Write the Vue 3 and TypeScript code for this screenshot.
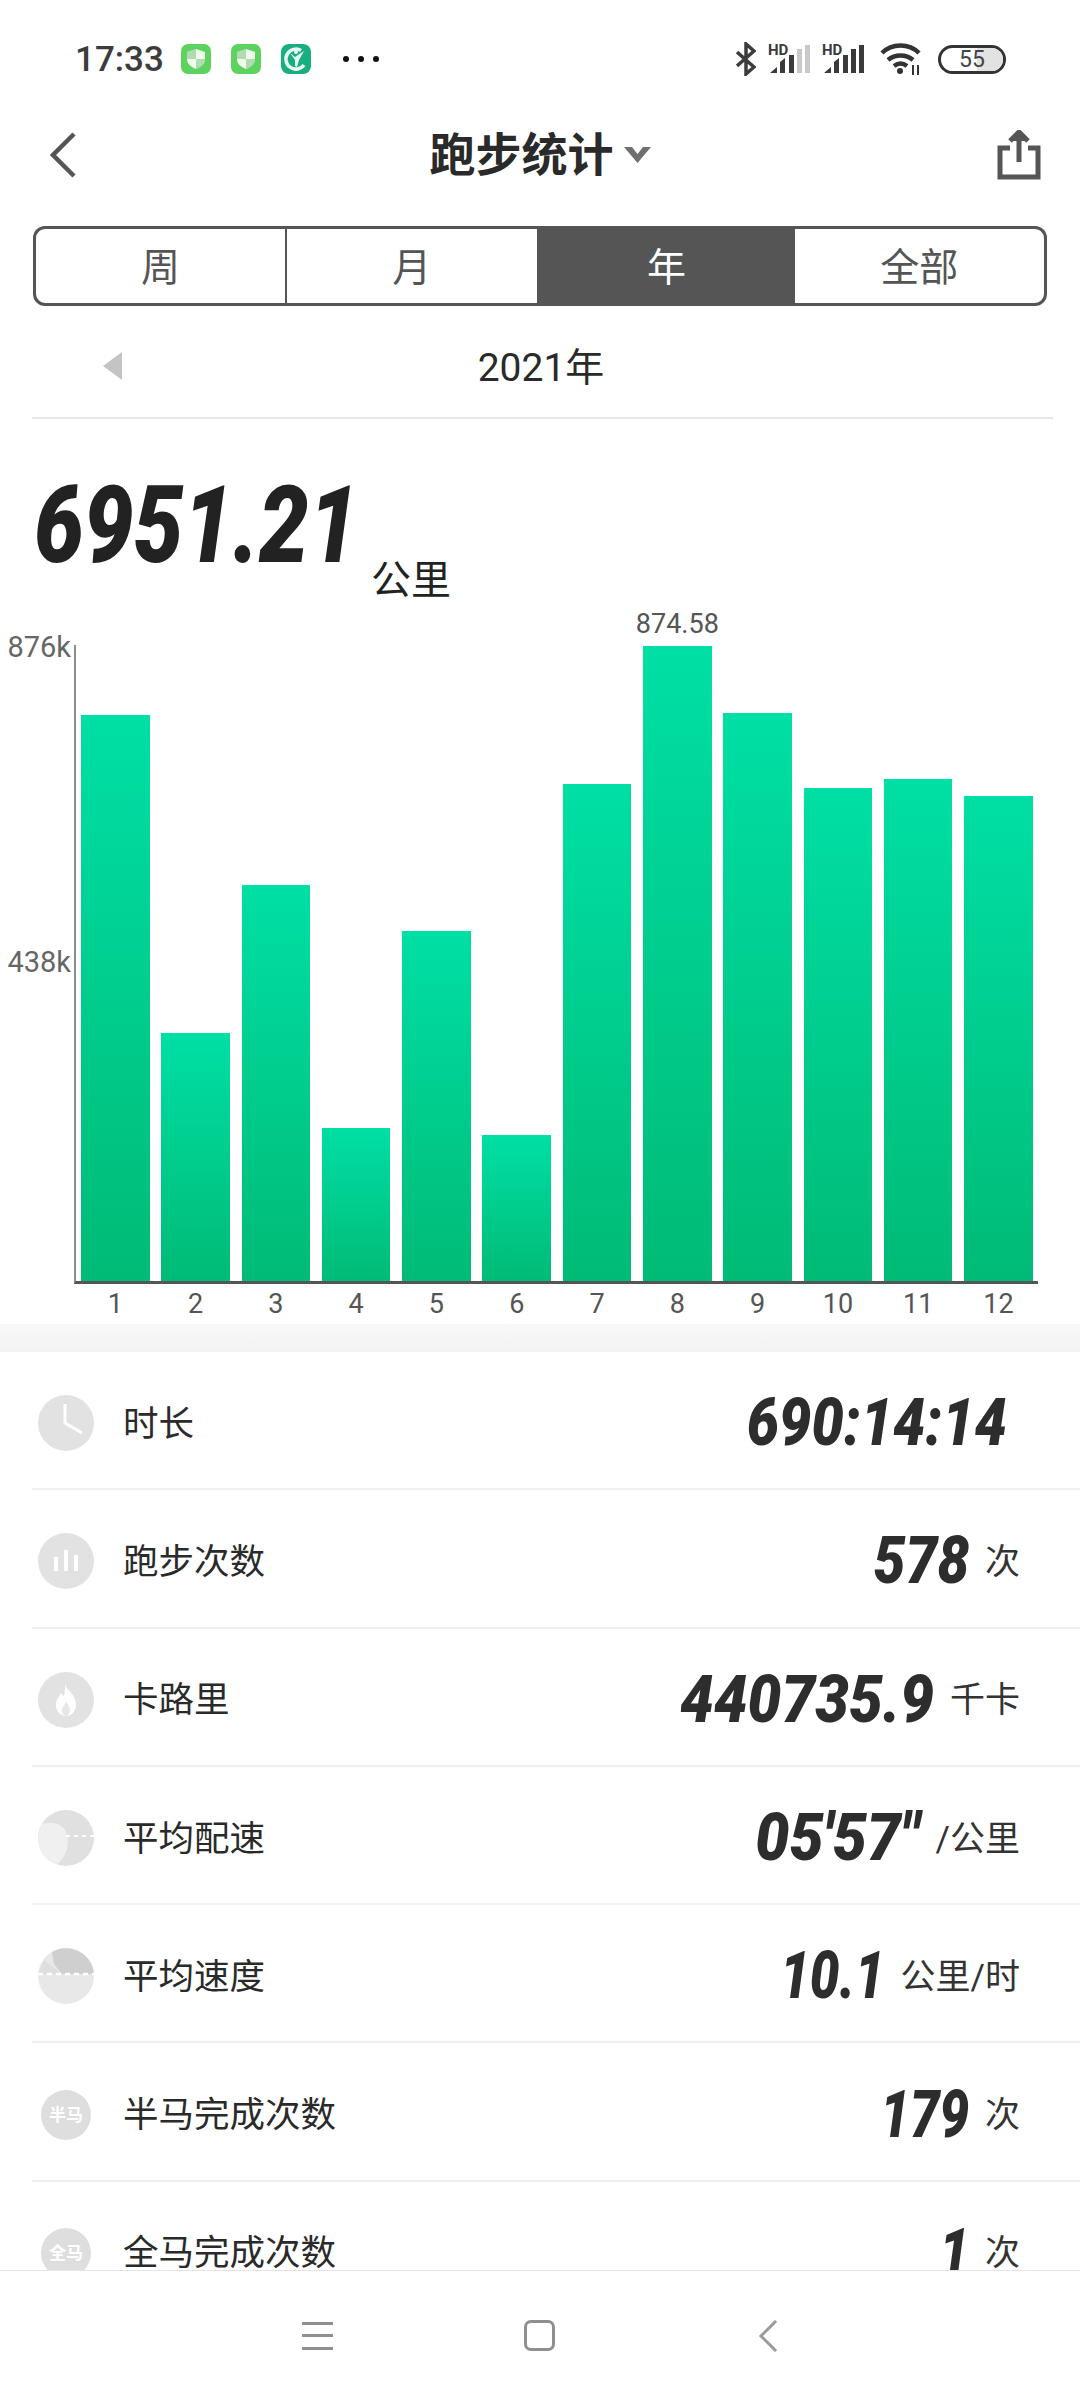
<script setup lang="ts">
interface StatRow {
  label: string
  value: string
  unit: string
  squeeze: number
  icon: 'clock' | 'bars' | 'flame' | 'pace' | 'speed' | 'half' | 'full'
}

const tabs = ['周', '月', '年', '全部']
const activeTab = 2

const months = [779.5, 341.6, 545.4, 210.7, 482, 201, 684.5, 874.58, 782.3, 679, 691.4, 668]
const maxValue = 876

const rows: StatRow[] = [
  { label: '时长', value: '690:14:14', unit: '', squeeze: 0.87, icon: 'clock' },
  { label: '跑步次数', value: '578', unit: '次', squeeze: 0.86, icon: 'bars' },
  { label: '卡路里', value: '440735.9', unit: '千卡', squeeze: 0.91, icon: 'flame' },
  { label: '平均配速', value: `05'57"`, unit: '/公里', squeeze: 0.92, icon: 'pace' },
  { label: '平均速度', value: '10.1', unit: '公里/时', squeeze: 0.8, icon: 'speed' },
  { label: '半马完成次数', value: '179', unit: '次', squeeze: 0.8, icon: 'half' },
  { label: '全马完成次数', value: '1', unit: '次', squeeze: 0.8, icon: 'full' },
]

function barHeight(value: number) {
  return `${(value / maxValue) * 100}%`
}
</script>

<template>
  <div class="page">
    <header class="status">
      <div class="status-left">
        <span class="time">17:33</span>
        <svg class="app-icon" viewBox="0 0 30 30">
          <rect width="30" height="30" rx="7" fill="#5ed25f" />
          <path d="M15 5l9 3v7c0 5-4 8-9 10-5-2-9-5-9-10V8z" fill="#eefbe9" />
          <path d="M15 5v10H6V8zM15 15h9c0 5-4 8-9 10z" fill="#7fbf8a" opacity=".55" />
        </svg>
        <svg class="app-icon" viewBox="0 0 30 30">
          <rect width="30" height="30" rx="7" fill="#5ed25f" />
          <path d="M15 5l9 3v7c0 5-4 8-9 10-5-2-9-5-9-10V8z" fill="#eefbe9" />
          <path d="M15 5v10H6V8zM15 15h9c0 5-4 8-9 10z" fill="#7fbf8a" opacity=".55" />
        </svg>
        <svg class="app-icon" viewBox="0 0 30 30">
          <rect width="30" height="30" rx="8" fill="#18ae82" />
          <path d="M20 6.500A10 10 0 1 0 23 21" fill="none" stroke="#e6f8f1" stroke-width="3.500" />
          <path d="M9 9l5 4 9-6-5 9-2 7-2-1 0-6z" fill="#e6f8f1" />
          <circle cx="15" cy="8" r="2" fill="#e6f8f1" />
        </svg>
        <span class="dots"><i></i><i></i><i></i></span>
      </div>
      <div class="status-right">
        <svg class="bt" viewBox="0 0 20 34" fill="none" stroke="#3c3c3c" stroke-width="3.500">
          <path d="M1 10l17 15-8 7V2l8 7L1 24" />
        </svg>
        <svg class="signal" viewBox="0 0 42 30">
          <text x="0" y="11" class="hd">HD</text>
          <path d="M2 29l7-6v6zM12 29V18l5-4v15zM21 29V11h5v18z" fill="#3a3a3a" />
          <path d="M29 29V5h5v24zM37 29V1h5v28z" fill="#c9c9c9" />
        </svg>
        <svg class="signal" viewBox="0 0 42 30">
          <text x="0" y="11" class="hd">HD</text>
          <path d="M2 29l7-6v6zM12 29V18l5-4v15zM21 29V11h5v18zM29 29V5h5v24zM37 29V1h5v28z" fill="#3a3a3a" />
        </svg>
        <svg class="wifi" viewBox="0 0 42 32" fill="none" stroke="#333" stroke-width="4.500">
          <path d="M2 10c10-10 27-10 37 0M8 17c7-6 18-6 25 0M14 23c4-3 9-3 13 0" />
          <circle cx="20" cy="28" r="3" fill="#333" stroke="none" />
          <path d="M33 22v10M38 22v10" stroke-width="2" />
        </svg>
        <div class="battery"><span class="battery-level"></span><span class="battery-text">55</span></div>
      </div>
    </header>

    <nav class="nav">
      <svg class="back" viewBox="0 0 26 46" fill="none" stroke="#555" stroke-width="4.500">
        <path d="M24 2L3 23l21 21" />
      </svg>
      <div class="title">
        <span>跑步统计</span>
        <svg class="caret" viewBox="0 0 29 17"><path d="M1 1h8l5.500 7L20 1h8L14.500 17z" fill="#6f6f6f" /></svg>
      </div>
      <svg class="share" viewBox="0 0 44 50" fill="none" stroke="#555" stroke-width="5">
        <path d="M13 18H3v29h38V18H31" />
        <path d="M22 32V5" />
        <path d="M13 11l9-9 9 9" fill="#555" />
      </svg>
    </nav>

    <div class="tabs">
      <div v-for="(tab, i) in tabs" :key="tab" class="tab" :class="{ active: i === activeTab }">{{ tab }}</div>
    </div>

    <div class="year-row">
      <svg class="prev" viewBox="0 0 19 28"><path d="M19 0v28L0 14z" fill="#c4c4c4" /></svg>
      <span>2021年</span>
    </div>

    <section class="summary">
      <span class="total"><span class="total-num">6951.21</span></span>
      <span class="total-unit">公里</span>
    </section>

    <section class="chart">
      <span class="y-label y-top">876k</span>
      <span class="y-label y-mid">438k</span>
      <div v-for="(value, i) in months" :key="i" class="bar" :style="{ height: barHeight(value) }">
        <span v-if="value === 874.58" class="bar-tip">874.58</span>
      </div>
    </section>
    <div class="x-axis">
      <span v-for="(_, i) in months" :key="i">{{ i + 1 }}</span>
    </div>
    <div class="band"></div>

    <main class="list">
      <div v-for="row in rows" :key="row.label" class="row">
        <svg class="row-icon" viewBox="0 0 56 56">
          <template v-if="row.icon === 'clock'">
            <circle cx="28" cy="28" r="28" fill="#e2e2e2" />
            <path d="M27 9v19l17 10" fill="none" stroke="#fff" stroke-width="3" />
          </template>
          <template v-else-if="row.icon === 'bars'">
            <circle cx="28" cy="28" r="28" fill="#e2e2e2" />
            <path d="M16 24h4v14h-4zM26 17h4v21h-4zM36 22h4v16h-4z" fill="#fff" />
          </template>
          <template v-else-if="row.icon === 'flame'">
            <circle cx="28" cy="28" r="28" fill="#e2e2e2" />
            <path d="M27 12c1 6 11 10 11 21 0 7-5 11-10 11s-10-4-10-11c0-6 3-8 5-12 1 2 2 3 3 3 1-4 1-8 1-12z" fill="#fff" />
            <path d="M28 30c2 3 4 5 4 8s-2 6-4 6-4-3-4-6 3-5 4-8z" fill="#e6e6e6" />
          </template>
          <template v-else-if="row.icon === 'pace'">
            <circle cx="28" cy="28" r="28" fill="#e0e0e0" />
            <path d="M4 14C12 12 22 12 27 20c6 12 2 26-8 34C8 50 0 40 0 28c0-5 2-10 4-14z" fill="#f0f0f0" />
            <path d="M28 26h28" stroke="#fff" stroke-width="2" stroke-dasharray="4 4" />
          </template>
          <template v-else-if="row.icon === 'speed'">
            <circle cx="28" cy="28" r="28" fill="#e8e8e8" />
            <path d="M14 4A28 28 0 0 1 56 26H24L16 16z" fill="#cfcfcf" />
            <path d="M6 12L0 26h24z" fill="#dedede" />
            <path d="M0 26h56" stroke="#fff" stroke-width="2.500" stroke-dasharray="5 4" />
          </template>
          <template v-else>
            <circle cx="28" cy="28" r="25" fill="#dedede" />
            <text x="28" y="34" class="badge">{{ row.icon === 'half' ? '半马' : '全马' }}</text>
          </template>
        </svg>
        <span class="row-label">{{ row.label }}</span>
        <span class="row-value" :class="{ solo: !row.unit }" :style="{ transform: `scaleX(${row.squeeze})` }">{{ row.value }}</span>
        <span v-if="row.unit" class="row-unit">{{ row.unit }}</span>
      </div>
    </main>

    <footer class="softkeys">
      <div class="menu-key"><i></i><i></i><i></i></div>
      <div class="home-key"></div>
      <svg class="back-key" viewBox="0 0 20 32" fill="none" stroke="#999" stroke-width="3">
        <path d="M18 1L3 16l15 15" />
      </svg>
    </footer>
  </div>
</template>

<style>
html,
body {
  margin: 0;
  background: #fff;
}
</style>

<style scoped>
.page {
  width: 1080px;
  height: 2400px;
  display: flex;
  flex-direction: column;
  overflow: hidden;
  background: #fff;
  color: #222;
  font-family: Roboto, 'Noto Sans CJK SC', sans-serif;
}

.status {
  height: 118px;
  flex-shrink: 0;
  display: flex;
  justify-content: space-between;
  align-items: center;
  padding: 0 74px 0 75px;
}

.status-left,
.status-right {
  display: flex;
  align-items: center;
}

.time {
  width: 106px;
  font-size: 35px;
  font-weight: 500;
  color: #3c3c3c;
}

.app-icon {
  width: 30px;
  height: 30px;
  margin-right: 20px;
}

.dots {
  display: flex;
  gap: 9px;
  margin-left: 12px;
}

.dots i {
  width: 6px;
  height: 6px;
  border-radius: 50%;
  background: #111;
}

.bt {
  width: 20px;
  height: 34px;
  margin-right: 12px;
}

.signal {
  width: 42px;
  height: 30px;
  margin-right: 12px;
  overflow: visible;
}

.hd {
  font-family: Roboto, sans-serif;
  font-size: 15px;
  font-weight: 700;
  fill: #3a3a3a;
}

.wifi {
  width: 42px;
  height: 32px;
  margin: 0 16px 0 4px;
}

.battery {
  position: relative;
  width: 68px;
  height: 29px;
  box-sizing: border-box;
  border: 3px solid #333;
  border-radius: 15px;
  overflow: hidden;
  display: flex;
  align-items: center;
  justify-content: center;
}

.battery-level {
  position: absolute;
  right: 0;
  top: 0;
  bottom: 0;
  width: 26px;
  background: #e2e2e2;
}

.battery-text {
  position: relative;
  font-size: 23px;
  color: #444;
}

.nav {
  height: 74px;
  flex-shrink: 0;
  display: grid;
  grid-template-columns: 1fr auto 1fr;
  align-items: center;
  padding: 0 39px 0 50px;
}

.back {
  width: 26px;
  height: 46px;
}

.title {
  display: flex;
  align-items: center;
  gap: 9px;
  margin-left: -10px;
  font-size: 46px;
  font-weight: 700;
  line-height: 1;
  color: #2a2a2a;
}

.caret {
  width: 29px;
  height: 17px;
  margin-top: -2px;
}

.share {
  width: 44px;
  height: 50px;
  justify-self: end;
}

.tabs {
  flex-shrink: 0;
  height: 80px;
  margin: 34px 33px 0;
  box-sizing: border-box;
  display: flex;
  border: 3px solid #555;
  border-radius: 12px;
  overflow: hidden;
}

.tab {
  flex: 1;
  display: flex;
  align-items: center;
  justify-content: center;
  padding-bottom: 4px;
  font-size: 39px;
  color: #555;
  border-left: 2px solid #555;
}

.tab:first-child {
  flex: 0 0 249px;
  border-left: 0;
}

.tab.active {
  flex: 0 0 256px;
  background: #555;
  color: #fff;
}

.tab.active + .tab {
  border-left: 0;
}

.year-row {
  position: relative;
  flex-shrink: 0;
  height: 107px;
  padding: 4px 3px 0 0;
  margin: 0 27px 0 32px;
  display: flex;
  align-items: center;
  justify-content: center;
  border-bottom: 2px solid #e6e6e6;
  font-size: 39px;
  color: #2a2a2a;
}

.prev {
  position: absolute;
  left: 71px;
  top: 46px;
  width: 19px;
  height: 28px;
}

.summary {
  flex-shrink: 0;
  height: 174px;
  padding: 52px 0 0 34px;
  display: flex;
  align-items: flex-start;
  color: #222;
}

.total {
  width: 322px;
  font-size: 108px;
  font-weight: 900;
  font-style: italic;
  line-height: 1;
  white-space: nowrap;
}

.total-num {
  display: inline-block;
  transform: scaleX(0.82);
  transform-origin: left center;
}

.total-unit {
  margin: 90px 0 0 15px;
  font-size: 40px;
  line-height: 1;
}

.chart {
  position: relative;
  flex-shrink: 0;
  height: 639px;
  margin-left: 74px;
  width: 964px;
  box-sizing: border-box;
  padding-left: 5px;
  display: flex;
  gap: 11.800px;
  align-items: flex-end;
  border-left: 2px solid #8c8c8c;
  border-bottom: 3px solid #555;
}

.y-label {
  position: absolute;
  right: 100%;
  margin-right: 5px;
  font-size: 29px;
  line-height: 1;
  color: #666;
}

.y-top {
  top: -12px;
}

.y-mid {
  top: 303px;
}

.bar {
  position: relative;
  width: 68.500px;
  flex-shrink: 0;
  background: linear-gradient(180deg, #00dfa5, #00bb76);
}

.bar-tip {
  position: absolute;
  left: -10px;
  right: -10px;
  bottom: 100%;
  margin-bottom: 8px;
  text-align: center;
  font-size: 27px;
  line-height: 1;
  color: #555;
}

.x-axis {
  flex-shrink: 0;
  height: 40px;
  margin-left: 74px;
  padding-left: 7px;
  display: flex;
  gap: 11.800px;
  align-items: center;
  font-size: 27px;
  color: #555;
}

.x-axis span {
  width: 68.500px;
  flex-shrink: 0;
  text-align: center;
}

.band {
  flex-shrink: 0;
  height: 28px;
  background: linear-gradient(180deg, #f8f8f8, #f3f3f3);
}

.list {
  flex: 1;
  min-height: 0;
  overflow: hidden;
  margin-left: 32px;
}

.row {
  height: 138.300px;
  box-sizing: border-box;
  padding: 6px 60px 0 6px;
  display: flex;
  align-items: center;
  border-bottom: 2px solid #f0f0f0;
}

.row-icon {
  width: 56px;
  height: 56px;
  flex-shrink: 0;
}

.badge {
  font-size: 17px;
  font-weight: 700;
  fill: #fff;
  text-anchor: middle;
}

.row-label {
  flex: 1;
  margin: 0 0 6px 29px;
  font-size: 35.500px;
  color: #2a2a2a;
}

.row-value {
  font-size: 66px;
  font-weight: 900;
  font-style: italic;
  line-height: 1;
  color: #2d2d2d;
  transform-origin: right center;
}

.row-value.solo {
  margin-right: 13px;
}

.row-unit {
  margin: 0 0 6px 16px;
  font-size: 35px;
  color: #333;
}

.softkeys {
  flex-shrink: 0;
  height: 130px;
  box-sizing: border-box;
  border-top: 1px solid #e4e4e4;
  display: flex;
  align-items: center;
  padding-left: 302px;
  background: #fff;
}

.menu-key {
  width: 31px;
  height: 28px;
  display: flex;
  flex-direction: column;
  justify-content: space-between;
}

.menu-key i {
  height: 3px;
  background: #8f8f8f;
}

.home-key {
  width: 31px;
  height: 31px;
  margin: 0 203px 0 191px;
  box-sizing: border-box;
  border: 3px solid #8f8f8f;
  border-radius: 7px;
}

.back-key {
  width: 20px;
  height: 32px;
}
</style>
